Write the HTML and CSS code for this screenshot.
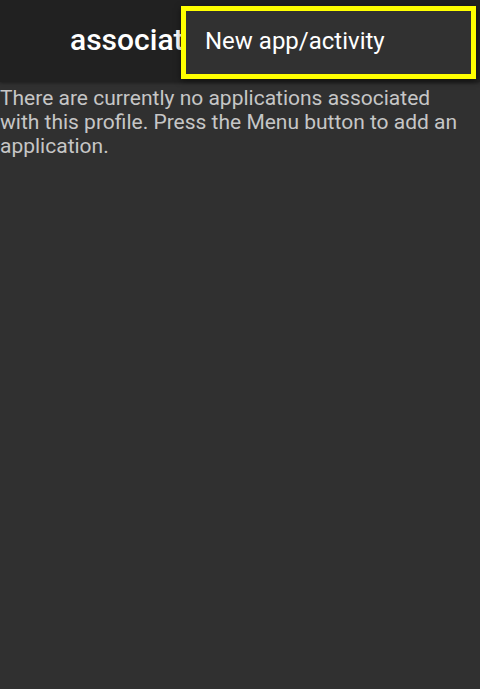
FILE: index.html
```html
<!DOCTYPE html>
<html>
<head>
<meta charset="utf-8">
<link rel="stylesheet" href="styles.css">
</head>
<body>
<div class="screen">
  <header class="toolbar">
    <span class="title">associat</span>
  </header>
  <p class="empty">There are currently no applications associated with this profile. Press the Menu button to add an application.</p>
  <div class="menu">
    <div class="menu-item">New app/activity</div>
  </div>
</div>
</body>
</html>
```
FILE: styles.css
```css
html, body {
  margin: 0;
  padding: 0;
  background: #303030;
}
.screen {
  position: relative;
  width: 480px;
  height: 689px;
  overflow: hidden;
  font-family: Roboto, "Noto Sans", sans-serif;
}
.toolbar {
  height: 82px;
  background: #212121;
  display: flex;
  align-items: center;
  padding-left: 70px;
  box-shadow: 0 1px 3px rgba(0,0,0,0.4);
  position: relative;
}
.title {
  color: #ffffff;
  font-size: 30px;
  font-weight: 500;
  white-space: nowrap;
  line-height: 40px;
  margin-top: -2px;
}
.empty {
  margin: 4px 0 0 0;
  padding-right: 14px;
  color: #c6c6c6;
  font-size: 21px;
  line-height: 24px;
}
.menu {
  position: absolute;
  left: 181px;
  top: 6px;
  width: 285px;
  height: 63px;
  background: #313131;
  border: 5px solid #ffff00;
  box-shadow: 0 2px 6px rgba(0,0,0,0.5);
  display: flex;
  align-items: center;
}
.menu-item {
  padding-left: 19px;
  color: #ffffff;
  font-size: 24px;
  margin-top: -3px;
}
```
